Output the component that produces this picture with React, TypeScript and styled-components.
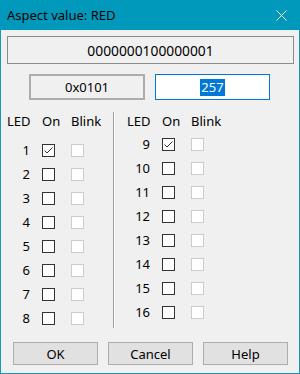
import React from 'react';
import styled, { createGlobalStyle } from 'styled-components';

const GlobalStyle = createGlobalStyle`
  html, body {
    margin: 0;
    padding: 0;
    background: #f0f0f0;
  }
  * {
    box-sizing: border-box;
  }
`;

const Window = styled.div`
  width: 300px;
  height: 374px;
  border: 1px solid #1797bd;
  border-top: none;
  background: #f0f0f0;
  font-family: 'Noto Sans', 'Open Sans', sans-serif;
  font-size: 13px;
  color: #000;
  display: flex;
  flex-direction: column;
`;

const TitleBar = styled.div`
  height: 30px;
  margin: 0 -1px;
  padding: 0 13px 0 7px;
  background: #0099bc;
  display: flex;
  align-items: center;
  justify-content: space-between;
  font-size: 13px;
`;

const Body = styled.div`
  padding: 6px 6px 0 6px;
  display: flex;
  flex-direction: column;
`;

const BinaryDisplay = styled.div`
  height: 28px;
  width: 287px;
  border: 1px solid #8c8c8c;
  display: flex;
  align-items: center;
  justify-content: center;
  font-size: 13.8px;
`;

const ValueRow = styled.div`
  display: flex;
  gap: 10px;
  margin: 10px 0 0 22px;
`;

const ValueBox = styled.div<{ $editable?: boolean }>`
  width: ${(p) => (p.$editable ? 115 : 116)}px;
  height: 26px;
  display: flex;
  align-items: center;
  justify-content: center;
  font-size: 13px;
  background: ${(p) => (p.$editable ? '#fff' : '#f0f0f0')};
  border: ${(p) => (p.$editable ? '1px solid #0078d7' : '2px solid #adadad')};
`;

const Selected = styled.span`
  background: #0078d7;
  color: #fff;
  padding: 1px 1px;
  line-height: 15px;
`;

const Columns = styled.div`
  display: flex;
  align-items: flex-start;
  margin-top: 12px;
  height: 216px;
`;

const LedColumn = styled.div<{ $offset: number }>`
  width: 106px;
  display: flex;
  flex-direction: column;
  & > div:nth-child(2) {
    margin-top: ${(p) => p.$offset}px;
  }
`;

const Separator = styled.div`
  width: 2px;
  height: 216px;
  border-left: 1px solid #a0a0a0;
  border-right: 1px solid #fff;
  margin-right: 12px;
`;

const Row = styled.div<{ $header?: boolean }>`
  display: grid;
  grid-template-columns: 35px 29px auto;
  align-items: center;
  height: ${(p) => (p.$header ? 16 : 24)}px;
`;

const LedNumber = styled.span`
  text-align: right;
  padding-right: 12px;
`;

const HeaderLabel = styled.span``;

const Box = styled.div<{ $disabled?: boolean }>`
  width: 13px;
  height: 13px;
  background: #fff;
  border: 1px solid ${(p) => (p.$disabled ? '#cccccc' : '#333333')};
  display: flex;
  align-items: center;
  justify-content: center;
`;

const Footer = styled.div`
  display: flex;
  gap: 10px;
  margin: 14px 0 0 6px;
`;

const Button = styled.div`
  width: 85px;
  height: 23px;
  background: #e1e1e1;
  border: 1px solid #adadad;
  display: flex;
  align-items: center;
  justify-content: center;
`;

function CheckBox({ checked, disabled }: { checked?: boolean; disabled?: boolean }) {
  return (
    <Box $disabled={disabled}>
      {checked && (
        <svg width="11" height="11" viewBox="0 0 11 11">
          <path d="M1.5 5.5 L4 8 L9.5 2.5" fill="none" stroke="#333" strokeWidth="1" />
        </svg>
      )}
    </Box>
  );
}

function Column({ leds, offset }: { leds: number[]; offset: number }) {
  return (
    <LedColumn $offset={offset}>
      <Row $header>
        <HeaderLabel>LED</HeaderLabel>
        <HeaderLabel>On</HeaderLabel>
        <HeaderLabel>Blink</HeaderLabel>
      </Row>
      {leds.map((n) => (
        <Row key={n}>
          <LedNumber>{n}</LedNumber>
          <CheckBox checked={n === 1 || n === 9} />
          <CheckBox disabled />
        </Row>
      ))}
    </LedColumn>
  );
}

export default function App() {
  return (
    <>
      <GlobalStyle />
      <Window>
        <TitleBar>
          <span>Aspect value: RED</span>
          <svg width="11" height="11" viewBox="0 0 11 11">
            <path d="M0.5 0.5 L10.5 10.5 M10.5 0.5 L0.5 10.5" stroke="#fff" strokeWidth="1" />
          </svg>
        </TitleBar>
        <Body>
          <BinaryDisplay>0000000100000001</BinaryDisplay>
          <ValueRow>
            <ValueBox>0x0101</ValueBox>
            <ValueBox $editable>
              <Selected>257</Selected>
            </ValueBox>
          </ValueRow>
          <Columns>
            <Column leds={[1, 2, 3, 4, 5, 6, 7, 8]} offset={10} />
            <Separator />
            <Column leds={[9, 10, 11, 12, 13, 14, 15, 16]} offset={4} />
          </Columns>
          <Footer>
            <Button>OK</Button>
            <Button>Cancel</Button>
            <Button>Help</Button>
          </Footer>
        </Body>
      </Window>
    </>
  );
}
